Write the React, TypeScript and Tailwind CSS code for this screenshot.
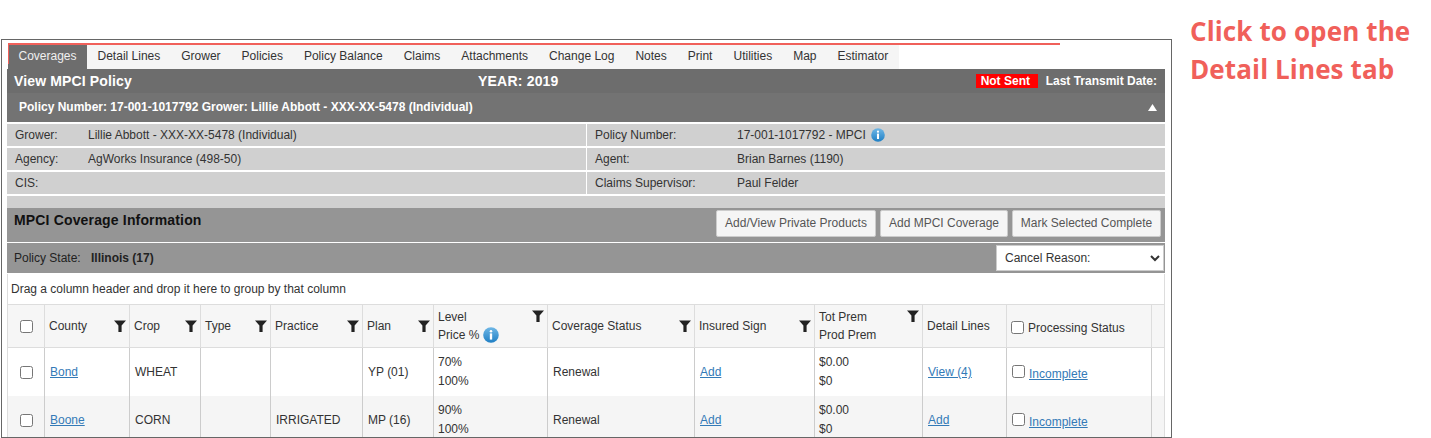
const tabs = ["Coverages","Detail Lines","Grower","Policies","Policy Balance","Claims","Attachments","Change Log","Notes","Print","Utilities","Map","Estimator"];
const cols = "grid grid-cols-[37px_85px_71px_70px_92px_71px_114px_147px_120px_108px_84px_145px_13px]";

function Info({ size = 14 }: { size?: number }) {
  return (
    <svg width={size} height={size} viewBox="0 0 15 15" className="inline-block shrink-0">
      <defs>
        <linearGradient id="ig" x1="0" y1="0" x2="0" y2="1">
          <stop offset="0" stopColor="#6fb7e6" />
          <stop offset="1" stopColor="#1f7fc4" />
        </linearGradient>
      </defs>
      <circle cx="7.5" cy="7.5" r="7.3" fill="url(#ig)" />
      <circle cx="7.5" cy="4" r="1.2" fill="#fff" />
      <rect x="6.4" y="6" width="2.2" height="5.8" fill="#fff" />
    </svg>
  );
}

function Funnel({ className = "" }: { className?: string }) {
  return (
    <svg width="12" height="12" viewBox="0 0 12 12" className={"shrink-0 " + className}>
      <path d="M0 0.5H12L7.6 5.5V12H4.4V5.5Z" fill="#222" />
    </svg>
  );
}

function Head({ label, second, top }: { label: string; second?: React.ReactNode; top?: boolean }) {
  return (
    <div className="flex items-start justify-between border-r border-[#ddd] pl-[4px] pr-[3px] leading-[18px]">
      <div className={second ? "pt-[3px]" : "pt-[12px]"}>
        {label}
        {second && <div>{second}</div>}
      </div>
      <Funnel className={top ? "mt-[5px]" : "mt-[15px]"} />
    </div>
  );
}

function InfoRow({ a, b, c, d }: { a: string; b: string; c: string; d: React.ReactNode }) {
  return (
    <div className="mt-[2px] grid grid-cols-[579px_578px] gap-x-px">
      <div className="flex h-[22px] items-center bg-[#d0d0d0] pl-2">
        <span className="w-[73px]">{a}</span>
        <span>{b}</span>
      </div>
      <div className="flex h-[22px] items-center bg-[#d0d0d0] pl-2">
        <span className="w-[142px]">{c}</span>
        <span className="flex items-center gap-[5px]">{d}</span>
      </div>
    </div>
  );
}

function Link({ children }: { children: React.ReactNode }) {
  return <a className="text-[#337ab7] underline">{children}</a>;
}

function Row({ county, crop, practice, plan, level, sign, detail, alt }: { county: string; crop: string; practice: string; plan: string; level: string; sign: string; detail: string; alt?: boolean }) {
  const cell = "flex items-center border-r border-[#ccc] pl-[5px]";
  const two = "flex flex-col justify-center border-r border-[#ccc] pl-[4px] leading-[19px]";
  return (
    <div className={cols + " h-[48px] " + (alt ? "bg-[#f5f5f5]" : "bg-white")}>
      <div className={cell + " pl-[12px]"}><input type="checkbox" className="size-[13px]" /></div>
      <div className={cell}><Link>{county}</Link></div>
      <div className={cell}>{crop}</div>
      <div className={cell}></div>
      <div className={cell}>{practice}</div>
      <div className={cell}>{plan}</div>
      <div className={two}><div>{level}</div><div>100%</div></div>
      <div className={cell}>Renewal</div>
      <div className={cell}><Link>{sign}</Link></div>
      <div className={two}><div>$0.00</div><div>$0</div></div>
      <div className={cell}><Link>{detail}</Link></div>
      <div className={cell + " gap-1"}><input type="checkbox" className="size-[13px] -mt-[1px]" /><span className="mt-[3px]"><Link>Incomplete</Link></span></div>
      <div></div>
    </div>
  );
}

export default function App() {
  return (
    <div className="relative h-[438px] w-[1431px] overflow-hidden bg-white font-['Liberation_Sans',Arial,sans-serif] text-[12px] text-[#333]">
      <div className="h-[39px]" />
      <div className="ml-px h-[399px] w-[1171px] border border-b-0 border-[#666] pl-[5px] pt-[5px]">
        <div className="ml-px flex h-[24px] w-[891px] items-center bg-[#f5f5f5]">
          {tabs.map((t, i) => (
            <div key={t} className={"flex h-full items-center px-[10.5px] pb-[2px] " + (i === 0 ? "bg-[#6d6d6d] text-[#f0f0f0]" : "")}>{t}</div>
          ))}
        </div>
        <div className="w-[1158px]">
          <div className="relative flex h-[24px] items-center justify-between bg-[#6d6d6d] pl-[7px] pr-[8px] font-bold text-white">
            <span className="text-[14px] tracking-[0.14px]">View MPCI Policy</span>
            <span className="absolute left-[471px] text-[14px] tracking-[0.2px]">YEAR: 2019</span>
            <span className="flex items-center gap-[8px]">
              <span className="flex h-[14px] w-[62px] items-center bg-[#ff0000] pl-[5px]">Not Sent</span>
              <span>Last Transmit Date:</span>
            </span>
          </div>
          <div className="flex h-[29px] items-center justify-between bg-[#737373] pb-px pl-[12px] pr-[8px] font-bold text-white">
            <span>Policy Number: 17-001-1017792 Grower: Lillie Abbott - XXX-XX-5478 (Individual)</span>
            <svg width="9" height="7" viewBox="0 0 9 7"><path d="M4.5 0L9 7H0Z" fill="#fff" /></svg>
          </div>
          <InfoRow a="Grower:" b="Lillie Abbott - XXX-XX-5478 (Individual)" c="Policy Number:" d={<>17-001-1017792 - MPCI <Info /></>} />
          <InfoRow a="Agency:" b="AgWorks Insurance (498-50)" c="Agent:" d="Brian Barnes (1190)" />
          <InfoRow a="CIS:" b="" c="Claims Supervisor:" d="Paul Felder" />
          <div className="mt-[2px] h-[12px] bg-[#d0d0d0]" />
          <div className="flex h-[34px] justify-between bg-[#959595] pl-[7px] pr-[4px]">
            <span className="pt-[2px] text-[14px] font-bold tracking-[0.16px] text-[#111]">MPCI Coverage Information</span>
            <div className="flex gap-1 pt-[2px]">
              {["Add/View Private Products","Add MPCI Coverage","Mark Selected Complete"].map((b, i) => (
                <button key={b} className={"h-[27px] rounded-[2px] border border-[#ccc] bg-[#f5f5f5] pb-[2px] text-[#555] " + (i === 0 ? "w-[160px]" : i === 1 ? "w-[128px]" : "w-[149px]")}>{b}</button>
              ))}
            </div>
          </div>
          <div className="mt-px flex h-[30px] items-center justify-between bg-[#959595] pl-[7px] pr-[1px]">
            <span className="text-[#222]">Policy State: <span className="ml-[7px] font-bold text-[#222]">Illinois (17)</span></span>
            <select className="h-[26px] w-[168px] border border-[#ccc] bg-white pl-[4px] text-[#333]">
              <option>Cancel Reason:</option>
            </select>
          </div>
          <div className="mt-px border-x border-[#ddd]">
            <div className="flex h-[30px] items-center pl-[3px] text-[#333]">Drag a column header and drop it here to group by that column</div>
            <div className={cols + " h-[44px] border-y border-[#ddd] bg-[#f6f6f6]"}>
              <div className="flex items-center border-r border-[#ddd] pl-[12px]"><input type="checkbox" className="size-[13px]" /></div>
              <Head label="County" />
              <Head label="Crop" />
              <Head label="Type" />
              <Head label="Practice" />
              <Head label="Plan" />
              <Head label="Level" top second={<span className="flex items-center gap-[4px]">Price % <Info size={16} /></span>} />
              <Head label="Coverage Status" />
              <Head label="Insured Sign" />
              <Head label="Tot Prem" top second="Prod Prem" />
              <div className="flex items-center border-r border-[#ddd] pl-[4px]">Detail Lines</div>
              <div className="flex items-center gap-[4px] border-r border-[#ddd] pl-[4px] pt-[3px]"><input type="checkbox" className="size-[13px]" />Processing Status</div>
              <div></div>
            </div>
            <Row county="Bond" crop="WHEAT" practice="" plan="YP (01)" level="70%" sign="Add" detail="View (4)" />
            <Row alt county="Boone" crop="CORN" practice="IRRIGATED" plan="MP (16)" level="90%" sign="Add" detail="Add" />
          </div>
        </div>
      </div>
      <div className="absolute bottom-0 left-px h-px w-[1171px] bg-[#666]" />
      <div className="absolute left-[8px] top-[43px] h-[2px] w-[1052px] bg-[#f0605a]" />
      <div className="absolute left-[8px] top-[43px] h-[21px] w-px bg-[#f0605a]" />
      <div className="absolute left-[1190px] top-[12px] font-['Open_Sans',sans-serif] text-[26px] font-bold leading-[38px] tracking-[0.12px] text-[#f0605a]">
        Click to open the<br />Detail Lines tab
      </div>
    </div>
  );
}
